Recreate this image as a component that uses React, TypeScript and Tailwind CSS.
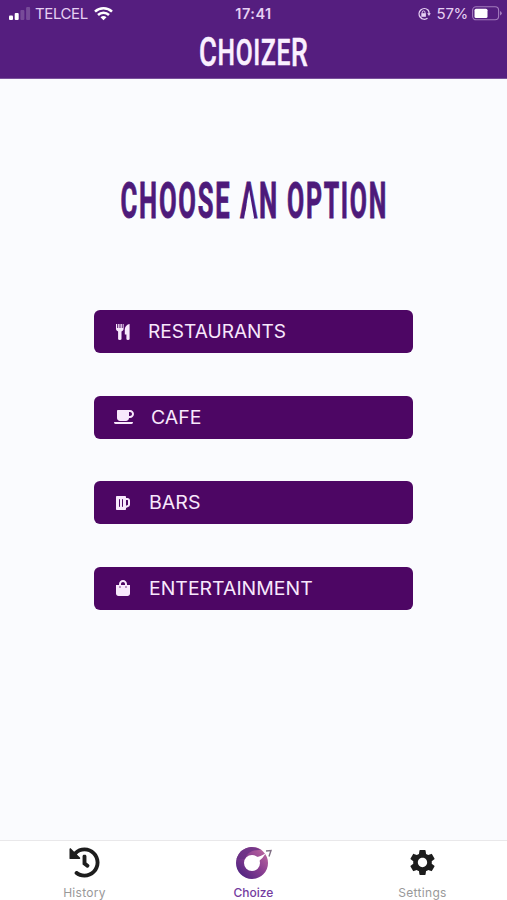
import type { ReactNode } from 'react';
import { FaBeer, FaCoffee, FaHistory, FaShoppingBag } from 'react-icons/fa';
import { MdSettings } from 'react-icons/md';

function StatusBar() {
  return (
    <div className="grid h-[27px] grid-cols-3 items-center text-[15px] leading-none text-[#e6d0f3]">
      <div className="flex items-center pl-[9px]">
        <svg width="22" height="14" viewBox="0 0 22 14" fill="#fff">
          <rect x="0" y="8.5" width="4" height="4.5" rx="1" />
          <rect x="5.7" y="6" width="4" height="7" rx="1" />
          <rect x="11.4" y="3" width="4" height="10" rx="1" opacity=".2" />
          <rect x="17.1" y="0" width="4" height="13" rx="1" opacity=".2" />
        </svg>
        <span className="ml-1 tracking-[-0.4px]">TELCEL</span>
        <svg className="ml-1.5" width="19" height="14" viewBox="0 0 19 14" fill="none" stroke="#fff" strokeWidth="2.5">
          <path d="M1 4.7a12.3 12.3 0 0 1 17 0" />
          <path d="M4 8a8 8 0 0 1 11 0" />
          <path d="M6.5 10.2a4.6 4.6 0 0 1 6 0L9.5 13.3z" fill="#fff" stroke="none" />
        </svg>
      </div>
      <span className="pt-px text-center text-[14.5px] font-semibold tracking-[0.5px]">17:41</span>
      <div className="flex items-center justify-end pr-[5px]">
        <svg width="14" height="14" viewBox="0 0 14 14" fill="none" stroke="currentColor" strokeWidth="1.4">
          <path d="M11 3A5.3 5.3 0 1 0 10.5 11.2M10.8 2.8A5.3 5.3 0 0 1 12.2 7" />
          <path d="M10.2 6.3h3.6l-1.8 2.6z" fill="currentColor" stroke="none" />
          <rect x="4.3" y="6.2" width="4.6" height="3.6" fill="currentColor" stroke="none" />
          <path d="M5.2 6.5V5.3a1.4 1.4 0 0 1 2.8 0v1.2" strokeWidth="1" />
        </svg>
        <span className="ml-1.5 tracking-[-0.3px]">57%</span>
        <svg className="ml-1" width="30" height="15" viewBox="0 0 30 15">
          <rect x="0.6" y="0.8" width="26" height="13" rx="3.5" fill="none" stroke="#a37bbd" strokeWidth="1.1" />
          <rect x="2.5" y="2.7" width="13" height="9.2" rx="1.5" fill="#fff" />
          <path d="M28 5v4.5q1.8-.8 1.8-2.2T28 5" fill="#a37bbd" />
        </svg>
      </div>
    </div>
  );
}

function Logo() {
  return (
    <svg className="mx-auto block overflow-visible" width="110" height="36" viewBox="0 0 110 36">
      <text
        x="0"
        y="29"
        fontFamily="Roboto, sans-serif"
        fontSize="36"
        fontWeight="500"
        letterSpacing="1"
        fill="#faf0ff"
        stroke="#faf0ff"
        strokeWidth="0.5"
        strokeLinejoin="round"
        textLength="109.5"
        lengthAdjust="spacingAndGlyphs"
      >
        <tspan fontSize="40" dy="1">C</tspan>
        <tspan dy="-1">HOIZE</tspan>
        <tspan fontSize="39" dy="1">R</tspan>
      </text>
    </svg>
  );
}

const headingWords = [
  { word: 'CHOOSE', x: -0.5, width: 111 },
  { word: 'AN', x: 119, width: 39 },
  { word: 'OPTION', x: 166, width: 101 },
];

function Heading() {
  return (
    <h1 className="mt-[95px]">
      <svg className="mx-auto block overflow-visible" width="266" height="52" viewBox="0 0 266 52">
        {headingWords.map(({ word, x, width }) => (
          <text
            key={word}
            x={x}
            y="43.5"
            fontFamily="Roboto, sans-serif"
            fontWeight="700"
            fontSize="50.5"
            letterSpacing="3.5"
            fill="#4d1a7a"
            stroke="#4d1a7a"
            strokeWidth="0.9"
            textLength={width}
            lengthAdjust="spacingAndGlyphs"
          >
            {word}
          </text>
        ))}
        <path d="M128.2 16L123.2 44.6H133.2z" fill="#fafbfe" />
      </svg>
    </h1>
  );
}

function OptionButton({ icon, label, className }: { icon: ReactNode; label: string; className: string }) {
  return (
    <button className="flex h-[43px] w-[319px] items-center rounded-md bg-[#4d0664] pl-[18px] text-[#f8e8fc]">
      <span className="flex w-[22px] justify-center">{icon}</span>
      <span className={`origin-left text-lg leading-none ${className}`}>{label}</span>
    </button>
  );
}

function CutleryIcon() {
  return (
    <svg width="14" height="16" viewBox="0 0 14 16" fill="currentColor">
      <path d="M0 0h1.2v4h1V0h1.3v4h1V0h1.3v4h.9V0H7.6v5.2Q7.4 6.7 5.5 7.4V15q0 1-1.7 1T2.1 15V7.4Q.2 6.7 0 5.2zM13.6 0v15q0 1-1.6 1t-1.6-1v-4.6H8.8V5Q9.5.8 13.6 0z" />
    </svg>
  );
}

function ChoizeIcon() {
  return (
    <svg width="38" height="34" viewBox="0 0 38 34">
      <defs>
        <linearGradient id="ring" x1="0" y1="1" x2="1" y2="0">
          <stop offset="0" stopColor="#512481" />
          <stop offset=".55" stopColor="#8a3f91" />
          <stop offset="1" stopColor="#b8649e" />
        </linearGradient>
      </defs>
      <circle cx="17" cy="17" r="12" fill="none" stroke="url(#ring)" strokeWidth="8" />
      <path d="M1.5 13Q5 2 16 1Q22 1 26 4Q14 3 9.5 13z" fill="#693184" opacity=".8" />
      <path d="M21 11q4 0 10-4-3 5-7 8z" fill="#fff" />
      <path d="M31 5l5-.5-2 6" fill="none" stroke="#806f84" strokeWidth="1.4" />
    </svg>
  );
}

function Tab({ icon, label, active }: { icon: ReactNode; label: string; active?: boolean }) {
  return (
    <div className="flex flex-col items-center pt-1">
      <div className="flex h-[35px] items-center">{icon}</div>
      <span className={`mt-[5px] text-[12px] leading-[15px] ${active ? 'font-medium text-[#743ba0]' : 'tracking-[0.3px] text-[#999]'}`}>
        {label}
      </span>
    </div>
  );
}

export default function App() {
  return (
    <div className="flex h-[900px] w-[507px] flex-col overflow-hidden bg-[#fafbfe] font-[Inter,sans-serif]">
      <header className="h-[79px] border-b border-[#79529b] bg-[#551e7f]">
        <StatusBar />
        <div className="pt-[9px]">
          <Logo />
        </div>
      </header>
      <main className="flex-1">
        <Heading />
        <div className="mt-[84px] flex flex-col items-center gap-[42.5px]">
          <OptionButton icon={<CutleryIcon />} label="RESTAURANTS" className="ml-3.5 scale-x-[1.06]" />
          <OptionButton icon={<FaCoffee size={20} className="ml-0.5" />} label="CAFE" className="ml-[17px] scale-x-[1.08] pt-px" />
          <OptionButton icon={<FaBeer size={16} />} label="BARS" className="ml-[15px] scale-x-[1.09] pt-px" />
          <OptionButton icon={<FaShoppingBag size={16} />} label="ENTERTAINMENT" className="ml-[15px] scale-x-[1.08] pt-px" />
        </div>
      </main>
      <nav className="grid h-[60px] grid-cols-3 border-t border-[#e9e8ea] bg-white">
        <Tab icon={<FaHistory size={31} color="#1d1d1d" />} label="History" />
        <Tab icon={<ChoizeIcon />} label="Choize" active />
        <Tab icon={<MdSettings size={31} color="#1d1d1d" />} label="Settings" />
      </nav>
    </div>
  );
}
